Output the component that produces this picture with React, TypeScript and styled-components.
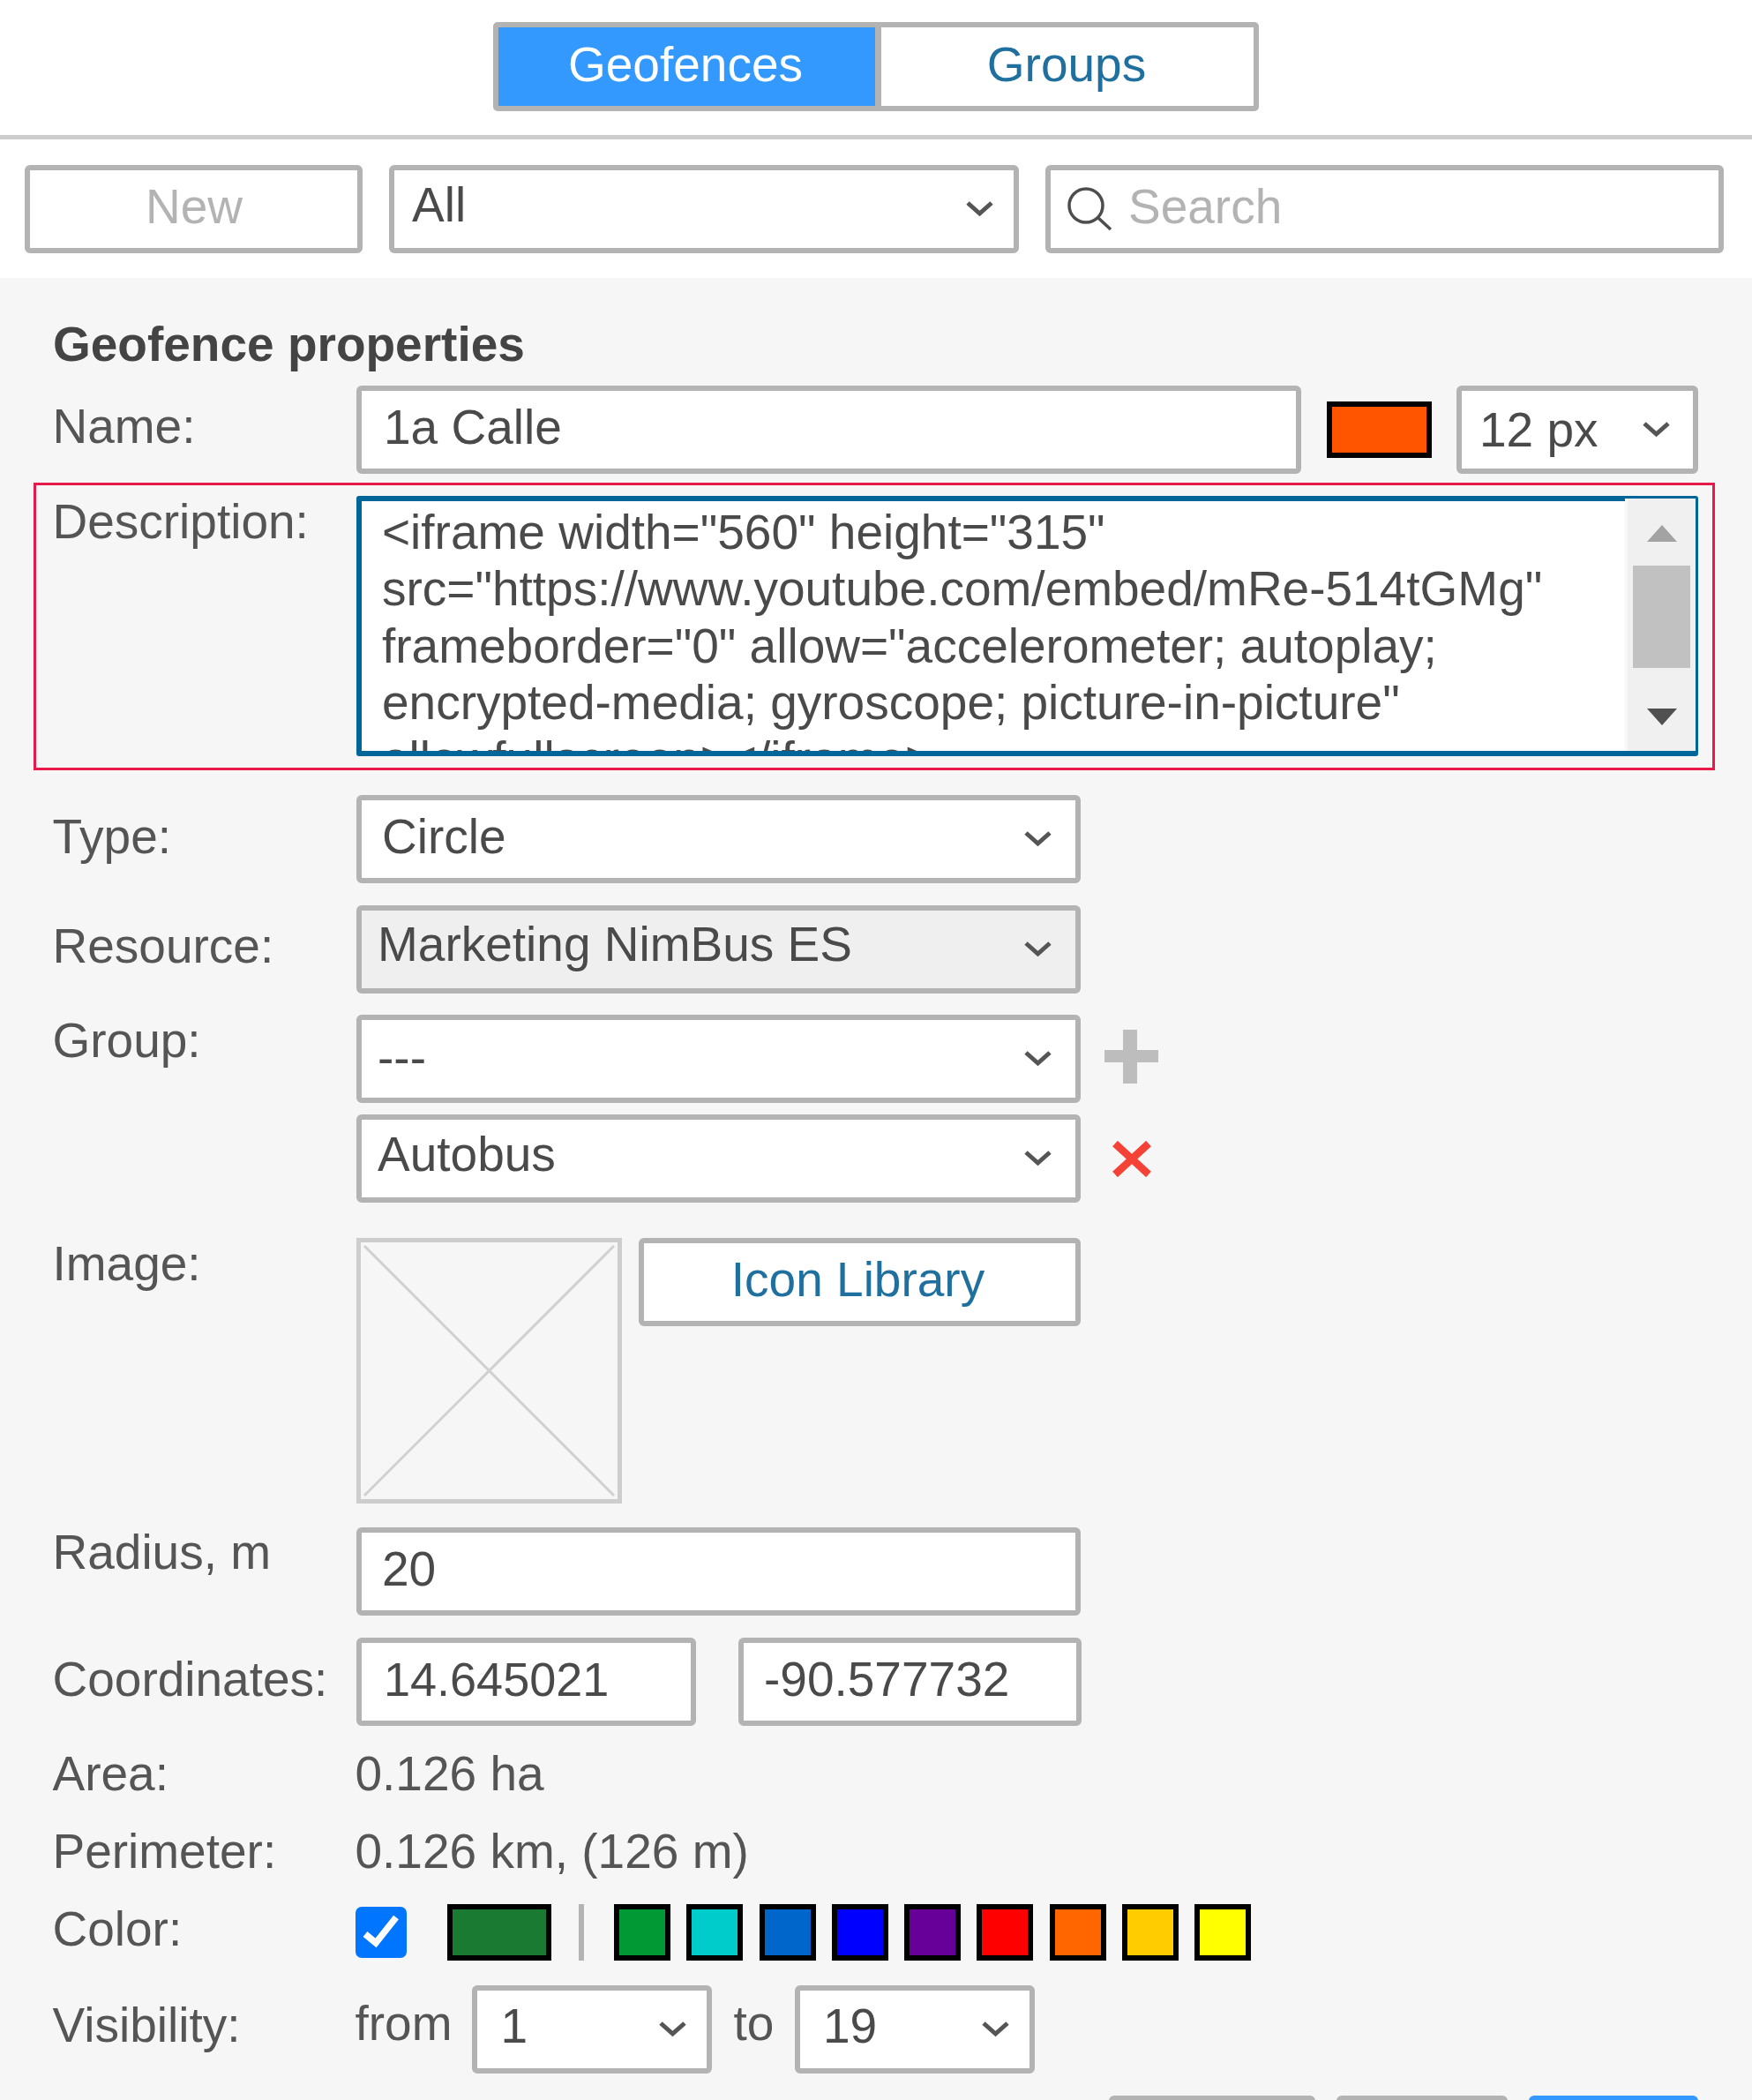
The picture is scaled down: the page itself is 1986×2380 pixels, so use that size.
import React from "react";
import styled, { createGlobalStyle } from "styled-components";

const Global = createGlobalStyle`
  html, body { margin: 0; padding: 0; background: #fff; }
  * { box-sizing: border-box; }
  #root { font-family: "Liberation Sans", Arial, sans-serif; }
`;

const Page = styled.div`
  width: 1986px;
  height: 2380px;
  overflow: hidden;
  background: #fff;
  font-size: 55px;
  color: #555;
`;

const Header = styled.header`
  height: 158px;
  padding-top: 25px;
  border-bottom: 5px solid #cdcdcd;
  display: flex;
  justify-content: center;
  align-items: flex-start;
`;

const Tabs = styled.div`
  display: flex;
  width: 868px;
  height: 101px;
  border: 6px solid #b3b3b3;
  border-radius: 5px;
  background: #fff;
`;

const Tab = styled.div<{ $active?: boolean }>`
  flex: ${(p) => (p.$active ? "0 0 434px" : "1 1 0")};
  display: flex;
  align-items: center;
  justify-content: center;
  padding: ${(p) => (p.$active ? "0 3px 6px 0" : "0 2px 6px 0")};
  color: ${(p) => (p.$active ? "#fff" : "#1f6f9f")};
  background: ${(p) => (p.$active ? "#3399ff" : "#fff")};
  border-right: ${(p) => (p.$active ? "7px solid #b3b3b3" : "none")};
`;

const Toolbar = styled.div`
  height: 157px;
  padding: 29px 32px 0 28px;
  display: flex;
  gap: 30px;
  align-items: flex-start;
`;

const Field = styled.div<{ $w?: number; $pl?: number; $pr?: number; $muted?: boolean; $disabled?: boolean; $grow?: boolean; $link?: boolean; $center?: boolean }>`
  ${(p) => (p.$grow ? "flex: 1 1 0;" : `flex: 0 0 ${p.$w ?? 821}px;`)}
  height: 100px;
  display: flex;
  align-items: center;
  justify-content: ${(p) => (p.$center ? "center" : "space-between")};
  padding: 0 ${(p) => p.$pr ?? 29}px 0 ${(p) => p.$pl ?? 25}px;
  border: 6px solid #b3b3b3;
  border-radius: 6px;
  background: ${(p) => (p.$disabled ? "#efefef" : "#fff")};
  color: ${(p) => (p.$link ? "#1f6f9f" : p.$muted ? "#b3b3b3" : "#4a4a4a")};
  white-space: nowrap;
`;

const FieldText = styled.span<{ $up?: number; $size?: number }>`
  padding-bottom: ${(p) => p.$up ?? 0}px;
  font-size: ${(p) => p.$size ?? 55}px;
`;

const Chevron = styled.svg`
  width: 31px;
  height: 20px;
  flex: none;
  margin-right: -6px;
  fill: none;
  stroke: #555;
  stroke-width: 5;
`;

const SearchIcon = styled.svg`
  width: 54px;
  height: 50px;
  flex: none;
  margin-left: -8px;
  margin-right: 17px;
  fill: none;
  stroke: #4d4d4d;
  stroke-width: 3.5;
`;

const SearchField = styled(Field)`
  justify-content: flex-start;
`;

const Panel = styled.main`
  height: 2065px;
  background: #f6f6f6;
  padding: 43px 61px 0 61px;
  display: flex;
  flex-direction: column;
`;

const Heading = styled.h2`
  margin: 0 0 0 -1px;
  font-size: 55px;
  font-weight: 700;
  line-height: 64px;
  color: #444;
`;

const Row = styled.div<{ $gap: number }>`
  display: flex;
  align-items: flex-start;
  margin-top: ${(p) => p.$gap}px;
  flex: none;
`;

const Label = styled.div<{ $top?: number }>`
  flex: 0 0 344.5px;
  margin-left: -1.5px;
  line-height: 64px;
  margin-top: ${(p) => p.$top ?? 0}px;
  white-space: nowrap;
`;

const Swatch = styled.div<{ $w?: number; $color: string }>`
  flex: 0 0 ${(p) => p.$w ?? 64}px;
  height: 64px;
  border: 6px solid #000;
  background: ${(p) => p.$color};
`;

const NameSwatch = styled(Swatch)`
  margin: 18px 28px 0 29px;
`;

const DescriptionBox = styled.section`
  display: flex;
  align-items: flex-start;
  margin: 10px 0 0 -23px;
  width: 1906px;
  height: 326px;
  padding: 12px 16px 0 20px;
  border: 3px solid #e8194b;
  flex: none;
`;

const TextArea = styled.div`
  flex: 1 1 0;
  height: 295px;
  display: flex;
  border: solid #006699;
  border-width: 6px 3px 6px 6px;
  border-radius: 3px;
  background: #fff;
`;

const TextContent = styled.div`
  flex: 1 1 0;
  overflow: hidden;
  padding: 3px 60px 0 23px;
  line-height: 64.3px;
  color: #4a4a4a;
`;

const Scrollbar = styled.div`
  flex: 0 0 80px;
  margin-top: -3px;
  border-left: 3px solid #f7f7f7;
  background: #f0f0f0;
  display: flex;
  flex-direction: column;
  align-items: center;
  padding-top: 30px;
`;

const ScrollUp = styled.div`
  width: 0;
  height: 0;
  border-left: 17px solid transparent;
  border-right: 17px solid transparent;
  border-bottom: 19px solid #a3a3a3;
`;

const ScrollThumb = styled.div`
  width: 65px;
  height: 116px;
  margin-top: 27px;
  background: #c1c1c1;
`;

const ScrollDown = styled.div`
  width: 0;
  height: 0;
  margin-top: 46px;
  border-left: 17px solid transparent;
  border-right: 17px solid transparent;
  border-top: 19px solid #505050;
`;

const ActionSlot = styled.div`
  flex: 0 0 61px;
  height: 100px;
  margin-left: 27px;
  display: flex;
  align-items: center;
  justify-content: center;
`;

const PlusIcon = styled.svg`
  margin-bottom: 6px;
  fill: #bdbdbd;
`;

const Placeholder = styled.svg`
  flex: 0 0 301px;
  height: 301px;
  margin-right: 19px;
  border: 5px solid #cdcdcd;
  stroke: #d0d0d0;
  stroke-width: 3;
`;

const Value = styled.div`
  line-height: 64px;
  margin-left: -1.5px;
`;

const Check = styled.div`
  flex: 0 0 58px;
  height: 58px;
  margin: 3px 46px 0 -1px;
  border-radius: 7px;
  background: #0075ff;
  display: flex;
`;

const Divider = styled.div`
  flex: 0 0 6px;
  height: 64px;
  margin: 0 34px 0 31px;
  background: #b3b3b3;
`;

const Palette = styled.div`
  display: flex;
  gap: 18.25px;
`;

const InlineWord = styled.div<{ $w: number; $pl?: number }>`
  flex: 0 0 ${(p) => p.$w}px;
  padding-left: ${(p) => p.$pl ?? 0}px;
  line-height: 64px;
  margin-top: 11px;
`;

const Footer = styled.div`
  margin-top: 25px;
  display: flex;
  justify-content: flex-end;
  gap: 24px;
`;

const FootButton = styled.div<{ $w: number; $primary?: boolean }>`
  flex: 0 0 ${(p) => p.$w}px;
  height: 100px;
  border: 6px solid ${(p) => (p.$primary ? "#3399ff" : "#b3b3b3")};
  border-radius: 6px;
  background: ${(p) => (p.$primary ? "#3399ff" : "#fff")};
`;

const CoordField = styled(Field)`
  margin-left: 48px;
`;

const FromWord = styled(InlineWord)`
  margin-left: -1.5px;
`;

const ChevronIcon = () => (
  <Chevron viewBox="0 0 31 20">
    <path d="M2 3 L15.5 15 L29 3" />
  </Chevron>
);

const colors = ["#009933", "#00cccc", "#0066cc", "#0000ff", "#660099", "#ff0000", "#ff6600", "#ffcc00", "#ffff00"];

export default function App() {
  return (
    <Page>
      <Global />
      <Header>
        <Tabs>
          <Tab $active>Geofences</Tab>
          <Tab>Groups</Tab>
        </Tabs>
      </Header>
      <Toolbar>
        <Field $w={383} $muted $center $pl={30}><FieldText $up={6}>New</FieldText></Field>
        <Field $w={714} $pl={20}>
          <FieldText $up={10}>All</FieldText>
          <ChevronIcon />
        </Field>
        <SearchField $grow $muted>
          <SearchIcon viewBox="0 0 54 50">
            <circle cx="23" cy="21" r="19" />
            <path d="M37 35 L51 48" />
          </SearchIcon>
          <FieldText $up={6}>Search</FieldText>
        </SearchField>
      </Toolbar>
      <Panel>
        <Heading>Geofence properties</Heading>
        <Row $gap={15}>
          <Label $top={14}>Name:</Label>
          <Field $grow><FieldText $up={6}>1a Calle</FieldText></Field>
          <NameSwatch $w={119} $color="#ff5500" />
          <Field $w={274} $pl={20} $pr={32}>
            12 px
            <ChevronIcon />
          </Field>
        </Row>
        <DescriptionBox>
          <Label $top={-3}>Description:</Label>
          <TextArea>
            <TextContent>
              {'<iframe width="560" height="315" src="https://www.youtube.com/embed/mRe-514tGMg" frameborder="0" allow="accelerometer; autoplay; encrypted-media; gyroscope; picture-in-picture" allowfullscreen></iframe>'}
            </TextContent>
            <Scrollbar>
              <ScrollUp />
              <ScrollThumb />
              <ScrollDown />
            </Scrollbar>
          </TextArea>
        </DescriptionBox>
        <Row $gap={28}>
          <Label $top={15}>Type:</Label>
          <Field $pl={23} $pr={33}>
            <FieldText $up={6}>Circle</FieldText>
            <ChevronIcon />
          </Field>
        </Row>
        <Row $gap={25}>
          <Label $top={14}>Resource:</Label>
          <Field $disabled $pl={18} $pr={33}>
            <FieldText $up={12}>Marketing NimBus ES</FieldText>
            <ChevronIcon />
          </Field>
        </Row>
        <Row $gap={24}>
          <Label $top={-3}>Group:</Label>
          <Field $pl={18} $pr={33}>
            <FieldText $up={2}>---</FieldText>
            <ChevronIcon />
          </Field>
          <ActionSlot>
            <PlusIcon width="61" height="61" viewBox="0 0 61 61">
              <path d="M21 0h16v23h24v14H37v24H21V37H0V23h21z" />
            </PlusIcon>
          </ActionSlot>
        </Row>
        <Row $gap={13}>
          <Label />
          <Field $pl={18} $pr={33}>
            <FieldText $up={10}>Autobus</FieldText>
            <ChevronIcon />
          </Field>
          <ActionSlot>
            <svg width="46" height="41" viewBox="0 0 46 41">
              <path d="M4 3 L42 38 M42 3 L4 38" stroke="#f44336" strokeWidth="8.5" fill="none" />
            </svg>
          </ActionSlot>
        </Row>
        <Row $gap={40}>
          <Label $top={-3}>Image:</Label>
          <Placeholder viewBox="0 0 291 291">
            <path d="M4 4 L287 287 M287 4 L4 287" fill="none" />
          </Placeholder>
          <Field $w={501} $center $link><FieldText $up={6}>Icon Library</FieldText></Field>
        </Row>
        <Row $gap={27}>
          <Label $top={-4}>Radius, m</Label>
          <Field $pl={23}><FieldText $up={7}>20</FieldText></Field>
        </Row>
        <Row $gap={25}>
          <Label $top={15}>Coordinates:</Label>
          <Field $w={385}><FieldText $up={7} $size={54}>14.645021</FieldText></Field>
          <CoordField $w={389} $pl={23}><FieldText $up={7} $size={55}>-90.577732</FieldText></CoordField>
        </Row>
        <Row $gap={22}>
          <Label>Area:</Label>
          <Value>0.126 ha</Value>
        </Row>
        <Row $gap={24}>
          <Label>Perimeter:</Label>
          <Value>0.126 km, (126 m)</Value>
        </Row>
        <Row $gap={28}>
          <Label $top={-4}>Color:</Label>
          <Check>
            <svg width="58" height="58" viewBox="0 0 58 58">
              <path d="M11 31 L23 41 L46 12" stroke="#fff" strokeWidth="7.5" fill="none" />
            </svg>
          </Check>
          <Swatch $w={118} $color="#1a7a32" />
          <Divider />
          <Palette>
            {colors.map((c) => (
              <Swatch key={c} $color={c} />
            ))}
          </Palette>
        </Row>
        <Row $gap={28}>
          <Label $top={13}>Visibility:</Label>
          <FromWord $w={132}>from</FromWord>
          <Field $w={272} $pl={27}>
            <FieldText $up={8}>1</FieldText>
            <ChevronIcon />
          </Field>
          <InlineWord $w={94.5} $pl={25}>to</InlineWord>
          <Field $w={272} $pl={26}>
            <FieldText $up={8}>19</FieldText>
            <ChevronIcon />
          </Field>
        </Row>
        <Footer>
          <FootButton $w={234} />
          <FootButton $w={194} />
          <FootButton $w={192} $primary />
        </Footer>
      </Panel>
    </Page>
  );
}
